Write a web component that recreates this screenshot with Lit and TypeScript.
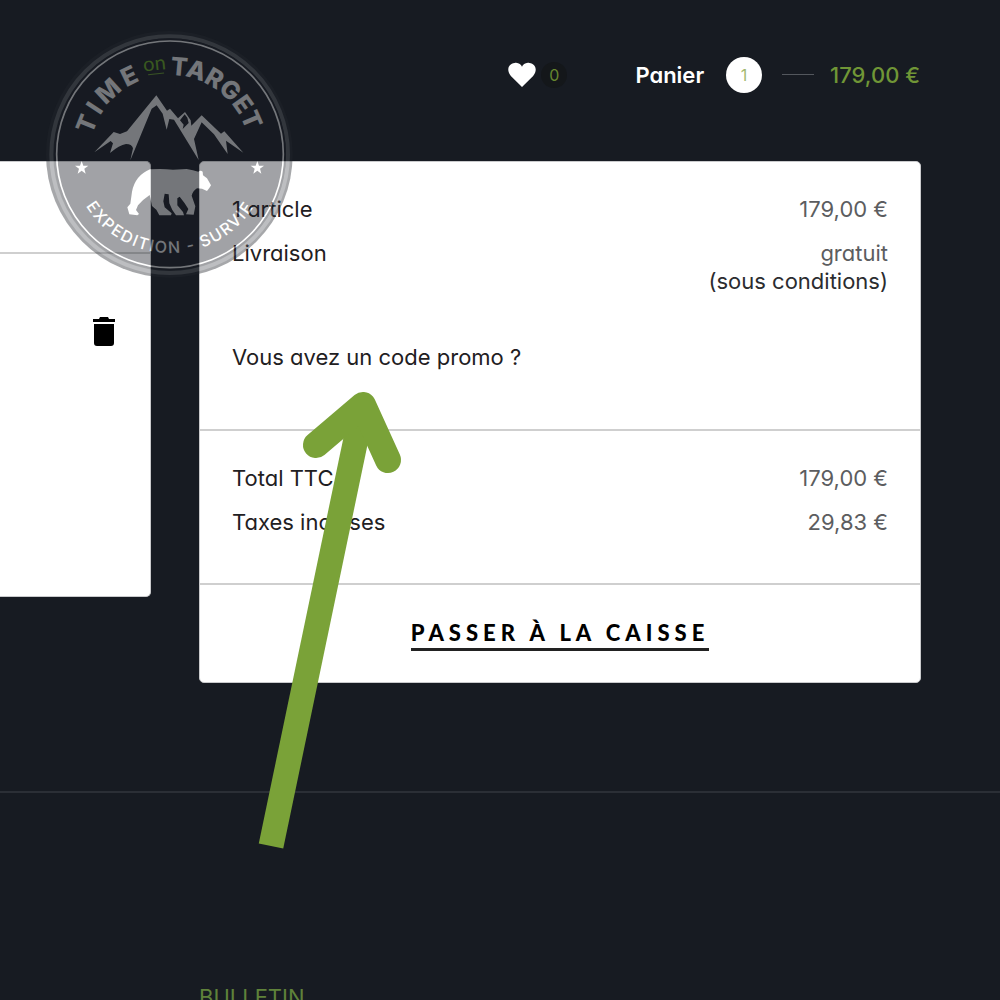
import { LitElement, html, css, svg } from "lit";
import { customElement } from "lit/decorators.js";

const STAR = "M0 -20 L5 -6 L20 -6 L8 3 L12 18 L0 9 L-12 18 L-8 3 L-20 -6 L-5 -6 Z";

@customElement("brand-seal")
class BrandSeal extends LitElement {
  static styles = css`
    :host { display: block; }
    .seal { display: block; width: 100%; height: 100%; opacity: 0.4; }
    .top { font: 800 75px Inter, "Liberation Sans", sans-serif; fill: #fff; }
    .time { letter-spacing: 12px; }
    .bottom { font: 500 48px Inter, "Liberation Sans", sans-serif; fill: #fff; letter-spacing: 5px; }
    .on { font: 400 60px Lato, "Liberation Sans", sans-serif; fill: #6db41c; }
  `;

  render() {
    return html`<svg class="seal" viewBox="0 0 780 780" role="img" aria-label="Time on Target">
      <defs>
        <path id="upper" d="M150 390 A240 240 0 0 1 630 390" />
        <path id="lower" d="M94 388 A296 296 0 0 0 686 388" />
      </defs>
      <circle cx="388" cy="388" r="370" fill="#22262c" />
      <circle cx="389" cy="389" r="355" fill="none" stroke="#5b5f65" stroke-width="12" />
      <circle cx="390" cy="388" r="348" fill="#171a22" />
      <circle cx="390" cy="388" r="340" fill="none" stroke="#fff" stroke-width="5" />
      <text class="top time"><textPath href="#upper" startOffset="8%">TIME</textPath></text>
      <text class="top"><textPath href="#upper" startOffset="50%">TARGET</textPath></text>
      <g transform="rotate(-6 344 125)">
        <text class="on" x="344" y="136" text-anchor="middle">on</text>
        <path d="M322 147 H370" stroke="#6da82a" stroke-width="3" />
      </g>
      <text class="bottom" text-anchor="middle"><textPath href="#lower" startOffset="50%">EXPEDITION - SURVIE</textPath></text>
      ${[125, 652].map((x) => svg`<path d=${STAR} fill="#fff" transform="translate(${x} 428)" />`)}
      <path
        fill="#fff"
        d="M349 211 L381 257 L390 251 L414 280 L435 261 L452 286 L454 302 L485 271 L543 326 L553 319 L610 383 L558 347 L563 387 L522 328 L485 292 L462 342 L476 405 L402 284 L388 282 L380 314 L368 266 L350 241 L335 251 L296 346 L271 406 L279 370 Q276 357 258 357 Q238 360 210 384 L219 355 L212 348 L163 382 L221 321 L240 327 L261 319 Z
           M434 268 L420 286 L431 299 L428 312 L446 294 L442 278 Z"
        fill-rule="evenodd"
      />
      <path
        fill="#fff"
        d="M330 433 Q365 430 399 434 L440 432 Q460 435 475 440 Q482 434 488 440 L489 451 L501 460 L513 481 L508 489 L501 498 L486 491 L471 490 Q458 499 455 512 L466 544 L461 569 L438 568 L445 552 L434 535 L419 515 L412 520 L412 541 L429 561 L432 571 L408 571 L397 555 L388 535 L386 508 L374 506 L370 529 L374 547 L395 565 L393 571 L358 571 L349 554 L336 543 L329 510 Q309 523 294 541 L288 555 L297 567 L292 571 L268 568 L262 547 L271 536 L276 500 Q286 451 330 433 Z"
      />
    </svg>`;
  }
}

@customElement("app-root")
class AppRoot extends LitElement {
  static styles = css`
    :host {
      display: block;
      position: relative;
      height: 100vh;
      overflow: hidden;
      background: #171b22;
      color: #1f2022;
      font: 400 22px/28px Inter, "Liberation Sans", sans-serif;
      font-feature-settings: "cv11";
    }
    a { color: inherit; text-decoration: none; }
    button { display: block; border: 0; padding: 0; background: none; cursor: pointer; }
    .header {
      display: flex;
      justify-content: flex-end;
      align-items: center;
      height: 149px;
      padding-right: 80px;
      box-sizing: border-box;
      color: #fff;
    }
    .wish { display: flex; align-items: center; gap: 4px; margin-right: 68px; }
    .heart { display: block; width: 30px; height: 26px; }
    .zero {
      width: 26px; height: 26px; border-radius: 50%;
      background: #14171a; color: #66862f;
      font-size: 16px; line-height: 26px; text-align: center;
    }
    .cart { display: flex; align-items: center; }
    .label { font-weight: 600; margin-right: 22px; }
    .count {
      width: 36px; height: 36px; border-radius: 50%;
      background: #fff; color: #a3b96f;
      font-size: 16px; line-height: 36px; text-align: center;
    }
    .dash { width: 32px; height: 1px; margin: 0 16px 0 20px; background: #53575d; }
    .amount { color: #709636; font-weight: 500; }
    .main {
      display: grid;
      grid-template-columns: 151fr 722fr;
      gap: 48px;
      align-items: start;
      padding: 12px 79px 0 0;
    }
    .card { background: #fff; border: 1px solid #c9cacc; border-radius: 5px; box-sizing: border-box; }
    .items { border-left: 0; border-radius: 0 5px 5px 0; padding-bottom: 249px; }
    .title { height: 90px; border-bottom: 2px solid #cfcfcf; }
    .item { display: flex; justify-content: flex-end; padding: 63px 34px 0 0; }
    .trash { display: block; width: 24px; height: 30px; }
    .part { padding: 33px 32px 0; border-bottom: 2px solid #cfcfcf; }
    .row { display: flex; justify-content: space-between; margin-bottom: 16px; }
    .value { color: #5c5d60; text-align: right; }
    .note { display: block; color: #2b2c2f; }
    .promo { display: inline-block; padding: 32px 0 58px; }
    .totals { padding-bottom: 31px; }
    .action { display: flex; justify-content: center; padding: 34px 0 31px; }
    .checkout {
      border-bottom: 3px solid #222;
      padding-bottom: 1px;
      color: #000;
      font: 900 22px/28px Lato, "Liberation Sans", sans-serif;
      letter-spacing: 5px;
    }
    .footer { margin-top: 108px; border-top: 2px solid #2b2f36; padding: 190px 79px 0 199px; }
    .heading { margin: 0; color: #5f823a; font-size: 22px; font-weight: 400; line-height: 28px; }
    .seal { position: absolute; left: 40px; top: 25px; width: 260px; height: 260px; pointer-events: none; }
    .arrow { position: absolute; left: 240px; top: 380px; width: 180px; height: 480px; pointer-events: none; }
  `;

  render() {
    return html`
      <header class="header">
        <a class="wish" href="#favoris" aria-label="Favoris">
          <svg class="heart" viewBox="0 0 32 28"><path fill="#fff" d="M16 27 L4 15 C-1 9 1 2 8 1 C12 0 15 3 16 5 C17 3 20 0 24 1 C31 2 33 9 28 15 Z" /></svg>
          <span class="zero">0</span>
        </a>
        <a class="cart" href="#panier">
          <span class="label">Panier</span><span class="count">1</span><span class="dash"></span><span class="amount">179,00 €</span>
        </a>
      </header>
      <main class="main">
        <section class="card items">
          <div class="title"></div>
          <div class="item">
            <button aria-label="Supprimer">
              <svg class="trash" viewBox="0 0 24 30"><path d="M1 2 H7 L8 0 H16 L17 2 H23 V5 H1 Z M2 7 H22 V26 Q22 29 19 29 H5 Q2 29 2 26 Z" /></svg>
            </button>
          </div>
        </section>
        <section class="card">
          <div class="part">
            <div class="row"><span>1 article</span><span class="value">179,00 €</span></div>
            <div class="row"><span>Livraison</span><span class="value">gratuit<span class="note">(sous conditions)</span></span></div>
            <a class="promo" href="#promo">Vous avez un code promo ?</a>
          </div>
          <div class="part totals">
            <div class="row"><span>Total TTC</span><span class="value">179,00 €</span></div>
            <div class="row"><span>Taxes incluses</span><span class="value">29,83 €</span></div>
          </div>
          <div class="action"><a class="checkout" href="#commande">PASSER À LA CAISSE</a></div>
        </section>
      </main>
      <footer class="footer"><h2 class="heading">BULLETIN</h2></footer>
      <brand-seal class="seal"></brand-seal>
      <svg class="arrow" viewBox="0 0 180 480" fill="none" stroke="#7aa238" aria-hidden="true">
        <path d="M31 466 L122 30" stroke-width="25" />
        <path d="M76 65 L123 25 L148 80" stroke-width="26" stroke-linecap="round" stroke-linejoin="round" />
      </svg>
    `;
  }
}
